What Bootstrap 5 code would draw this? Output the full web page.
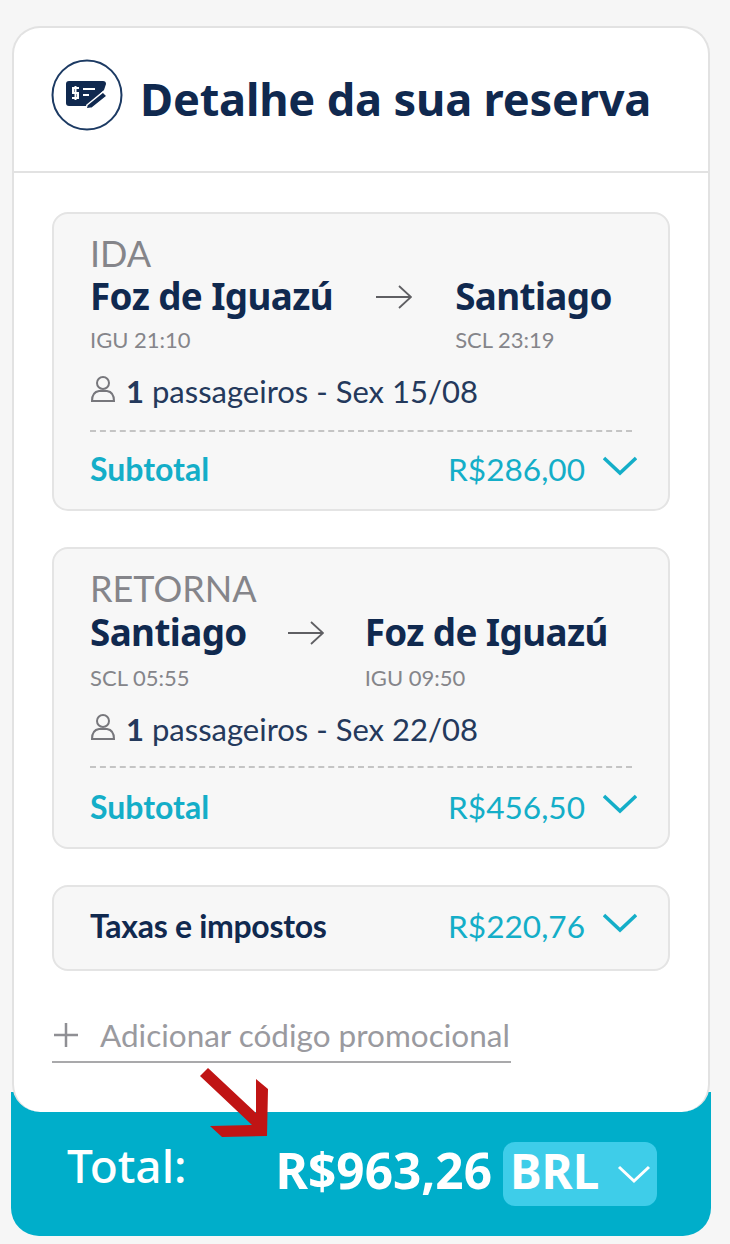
<!DOCTYPE html>
<html lang="pt">
<head>
<meta charset="utf-8">
<title>Detalhe da sua reserva</title>
<link href="https://cdn.jsdelivr.net/npm/bootstrap@5.3.0/dist/css/bootstrap.min.css" rel="stylesheet">
<style>
html,body{height:100%}
body{background:#f6f6f6;font-family:"Lato","Liberation Sans",sans-serif;color:#0f2a52;padding:26px 19px 0 11px;overflow:hidden}
.rs-wrap{width:700px;position:relative}
.rs-panel{position:relative;z-index:1;margin:0 1px;height:1086px;background:#fff;border:2px solid #e2e2e2;border-bottom:0;border-radius:28px}
.rs-head{height:145px;border-bottom:2px solid #e2e2e2;padding:0 0 0 37px;gap:17px}
.rs-icon{margin-bottom:10px}
.rs-title{font-family:"Noto Sans","Liberation Sans",sans-serif;font-weight:700;font-size:45.2px;line-height:1;color:#10294f;margin:0 0 2px;white-space:nowrap;letter-spacing:-.2px}
.rs-body{padding:39px 38px 0 38px}
.rs-box{background:#f7f7f7;border:2px solid #e4e4e4;border-radius:16px;padding:0 36px 0 36px;margin-bottom:36px}
.rs-box1{height:299px}
.rs-box2{height:302px;margin-bottom:36px}
.rs-box3{height:86px;margin-bottom:0;padding-top:20px}
.rs-kind{font-size:36px;line-height:40px;color:#85858a;padding-top:19px;height:59px}
.rs-box2 .rs-kind{height:60px}
.rs-city{font-family:"Noto Sans","Liberation Sans",sans-serif;font-weight:700;font-size:36.8px;line-height:46px;color:#10294f;white-space:nowrap;letter-spacing:-.6px}
.rs-code{font-size:22px;line-height:26px;color:#85858a;margin-top:8px}
.rs-box2 .rs-code{margin-top:10px}
.rs-route{gap:43px}
.rs-box2 .rs-route{gap:41px}
.rs-arrow{margin-top:9px}
.rs-pax{font-size:31px;line-height:36px;color:#24395c;margin-top:20px;gap:10px}
.rs-person{margin-top:-4px}
.rs-pax b{font-weight:700}
.rs-sep{border-top:2px dashed #c4c4c4;margin:21px 0 0}
.rs-box2 .rs-sep{margin-top:19px}
.rs-sub{margin-top:18px;color:#14aec8;font-size:31.6px;line-height:38px}
.rs-box2 .rs-sub{margin-top:20px}
.rs-sub b{font-weight:700;font-size:32px}
.rs-price{gap:18px}
.rs-chev{margin:-6px -5px 0 0}
.rs-tax{color:#10294f;font-size:32px;font-weight:700;line-height:38px;letter-spacing:-.3px}
.rs-promo{margin-top:46px;width:459px;height:46px;border-bottom:2px solid #a9a9ab;color:#9a9a9f;font-size:31.5px;line-height:38px;gap:20px;padding-bottom:8px}
.rs-foot{position:relative;margin-top:-20px;height:144px;background:#00aeca;border-radius:0 0 28px 28px;color:#fff;padding:20px 54px 0 56px}
.rs-total{font-family:"Noto Sans","Liberation Sans",sans-serif;font-size:46px;line-height:50px;font-weight:500;margin-bottom:18px}
.rs-sum{font-family:"Noto Sans","Liberation Sans",sans-serif;font-size:49.5px;line-height:54px;font-weight:700;white-space:nowrap;margin:0 3px 8px 0}
.rs-cur{background:#3ecde9;border-radius:12px;height:64px;width:154px;font-family:"Noto Sans","Liberation Sans",sans-serif;font-size:47.5px;font-weight:700;gap:18px;padding:0 0 6px 7px;border:0;color:#fff}
.rs-cur svg{margin-top:6px}
.rs-annot{position:absolute;left:189px;top:1042px;z-index:3}
</style>
</head>
<body>
<div class="rs-wrap">
  <div class="rs-panel">
    <div class="rs-head d-flex align-items-center">
      <svg class="rs-icon flex-shrink-0" width="72" height="72" viewBox="0 0 72 72" aria-hidden="true">
        <circle cx="36" cy="36" r="34.500" fill="none" stroke="#1c3a63" stroke-width="2"/>
        <path d="M15 25a3 3 0 0 1 3-3h34a3 3 0 0 1 3 3l-2 6-17 16H18a3 3 0 0 1-3-3z" fill="#10294f"/>
        <path d="M28 29h-6v5h5v5h-6M24.500 27v14M32 30h12M32 36h6" fill="none" stroke="#fff" stroke-width="2"/>
        <path d="M36 46l16-13 4 4-15 12-6 1z" fill="#10294f" stroke="#fff" stroke-width="1.500"/>
      </svg>
      <h1 class="rs-title">Detalhe da sua reserva</h1>
    </div>
    <div class="rs-body">
      <section class="rs-box rs-box1">
        <div class="rs-kind">IDA</div>
        <div class="rs-route d-flex align-items-start">
          <div><div class="rs-city">Foz de Iguazú</div><div class="rs-code">IGU 21:10</div></div>
          <svg class="rs-arrow flex-shrink-0" width="36" height="30" viewBox="0 0 36 30" aria-hidden="true"><path d="M0 15h35M23 4l12 11-12 11" fill="none" stroke="#5f5f63" stroke-width="1.800"/></svg>
          <div><div class="rs-city">Santiago</div><div class="rs-code">SCL 23:19</div></div>
        </div>
        <div class="rs-pax d-flex align-items-center">
          <svg class="rs-person" width="26" height="28" viewBox="0 0 26 28" aria-hidden="true"><circle cx="13" cy="8" r="6" fill="none" stroke="#77777c" stroke-width="2"/><path d="M2 26c0-3 0-9 7-10h8c7 1 7 7 7 10z" fill="none" stroke="#77777c" stroke-width="2"/></svg>
          <span><b>1</b> passageiros - Sex 15/08</span>
        </div>
        <div class="rs-sep"></div>
        <div class="rs-sub d-flex justify-content-between align-items-center">
          <b>Subtotal</b>
          <span class="rs-price d-flex align-items-center"><span>R$286,00</span><svg class="rs-chev" width="34" height="20" viewBox="0 0 34 20" aria-hidden="true"><path d="M1 2l16 15L33 2" fill="none" stroke="#14aec8" stroke-width="3.500"/></svg></span>
        </div>
      </section>
      <section class="rs-box rs-box2">
        <div class="rs-kind">RETORNA</div>
        <div class="rs-route d-flex align-items-start">
          <div><div class="rs-city">Santiago</div><div class="rs-code">SCL 05:55</div></div>
          <svg class="rs-arrow flex-shrink-0" width="36" height="30" viewBox="0 0 36 30" aria-hidden="true"><path d="M0 15h35M23 4l12 11-12 11" fill="none" stroke="#5f5f63" stroke-width="1.800"/></svg>
          <div><div class="rs-city">Foz de Iguazú</div><div class="rs-code">IGU 09:50</div></div>
        </div>
        <div class="rs-pax d-flex align-items-center">
          <svg class="rs-person" width="26" height="28" viewBox="0 0 26 28" aria-hidden="true"><circle cx="13" cy="8" r="6" fill="none" stroke="#77777c" stroke-width="2"/><path d="M2 26c0-3 0-9 7-10h8c7 1 7 7 7 10z" fill="none" stroke="#77777c" stroke-width="2"/></svg>
          <span><b>1</b> passageiros - Sex 22/08</span>
        </div>
        <div class="rs-sep"></div>
        <div class="rs-sub d-flex justify-content-between align-items-center">
          <b>Subtotal</b>
          <span class="rs-price d-flex align-items-center"><span>R$456,50</span><svg class="rs-chev" width="34" height="20" viewBox="0 0 34 20" aria-hidden="true"><path d="M1 2l16 15L33 2" fill="none" stroke="#14aec8" stroke-width="3.500"/></svg></span>
        </div>
      </section>
      <section class="rs-box rs-box3">
        <div class="d-flex justify-content-between align-items-center rs-sub mt-0">
          <span class="rs-tax">Taxas e impostos</span>
          <span class="rs-price d-flex align-items-center"><span>R$220,76</span><svg class="rs-chev" width="34" height="20" viewBox="0 0 34 20" aria-hidden="true"><path d="M1 2l16 15L33 2" fill="none" stroke="#14aec8" stroke-width="3.500"/></svg></span>
        </div>
      </section>
      <div class="rs-promo d-flex align-items-center">
        <svg width="28" height="28" viewBox="0 0 28 28" aria-hidden="true"><path d="M14 2v24M2 14h24" stroke="#8f8f94" stroke-width="2.500"/></svg>
        <span>Adicionar código promocional</span>
      </div>
    </div>
  </div>
  <div class="rs-foot d-flex justify-content-between align-items-center">
    <span class="rs-total">Total:</span>
    <span class="d-flex align-items-center gap-2">
      <span class="rs-sum">R$963,26</span>
      <button type="button" class="rs-cur d-flex align-items-center">BRL<svg width="34" height="20" viewBox="0 0 34 20" aria-hidden="true"><path d="M2 3l15 14L32 3" fill="none" stroke="#fff" stroke-width="3"/></svg></button>
    </span>
  </div>
  <svg class="rs-annot" width="70" height="70" viewBox="0 0 70 70" aria-hidden="true"><path d="M0 8L8 0 56 45V11L68 21 67 68 22 69 10 58 52 57z" fill="#c01414"/></svg>
</div>
<script src="https://cdn.jsdelivr.net/npm/bootstrap@5.3.0/dist/js/bootstrap.bundle.min.js"></script>
</body>
</html>
